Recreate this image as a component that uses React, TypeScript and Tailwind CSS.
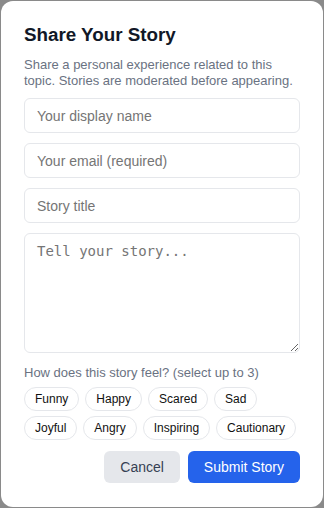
import React from 'react';

const MOODS: string[] = [
  "Funny", "Happy", "Scared", "Sad", "Joyful", "Angry", "Inspiring", "Cautionary"
];

export default function App() {
  const [picked, setPicked] = React.useState<string[]>([]);

  const toggle = (mood: string) => {
    setPicked(prev =>
      prev.includes(mood)
        ? prev.filter(m => m !== mood)
        : prev.length < 3 ? [...prev, mood] : prev
    );
  };

  return (
    <div className="min-h-screen bg-[#8a8a8a] p-px font-['Liberation_Sans',Arial,sans-serif]">
      <div className="bg-white rounded-xl h-[506px] px-[23px] pt-[20px] pb-6 flex flex-col">
        <h2 className="text-[18.8px] leading-7 font-bold text-[#111827]">Share Your Story</h2>
        <p className="mt-[8px] text-[13px] leading-4 text-gray-500">
          Share a personal experience related to this topic. Stories are moderated before appearing.
        </p>

        <div className="mt-[9px] flex flex-col gap-[10px]">
          <input
            type="text"
            placeholder="Your display name"
            className="h-[35px] w-full rounded-md border border-[#e5e7eb] px-3 text-sm text-gray-900 placeholder:text-[#757575] outline-none"
          />
          <input
            type="email"
            placeholder="Your email (required)"
            className="h-[35px] w-full rounded-md border border-[#e5e7eb] px-3 text-sm text-gray-900 placeholder:text-[#757575] outline-none"
          />
          <input
            type="text"
            placeholder="Story title"
            className="h-[35px] w-full rounded-md border border-[#e5e7eb] px-3 text-sm text-gray-900 placeholder:text-[#757575] outline-none"
          />
          <textarea
            placeholder="Tell your story..."
            className="h-[120px] w-full rounded-md border border-[#e5e7eb] px-3 py-[7px] text-sm font-['DejaVu_Sans_Mono',monospace] text-gray-900 placeholder:text-[#757575] outline-none"
          />
        </div>

        <p className="mt-[12px] text-[13px] leading-4 text-gray-500">
          How does this story feel? (select up to 3)
        </p>
        <div className="mt-[6px] flex flex-wrap gap-x-[6px] gap-y-[5px]">
          {MOODS.map(mood => (
            <button
              key={mood}
              onClick={() => toggle(mood)}
              className={`h-6 px-[10px] rounded-full border text-xs leading-none ${
                picked.includes(mood)
                  ? 'border-blue-600 bg-blue-50 text-blue-700'
                  : 'border-[#e5e7eb] text-[#111]'
              }`}
            >
              {mood}
            </button>
          ))}
        </div>

        <div className="mt-[11px] flex justify-end gap-2">
          <button className="h-8 px-4 rounded-md bg-[#e5e7eb] text-sm text-gray-700">
            Cancel
          </button>
          <button className="h-8 px-4 rounded-md bg-[#2563eb] text-sm text-white">
            Submit Story
          </button>
        </div>
      </div>
    </div>
  );
}
